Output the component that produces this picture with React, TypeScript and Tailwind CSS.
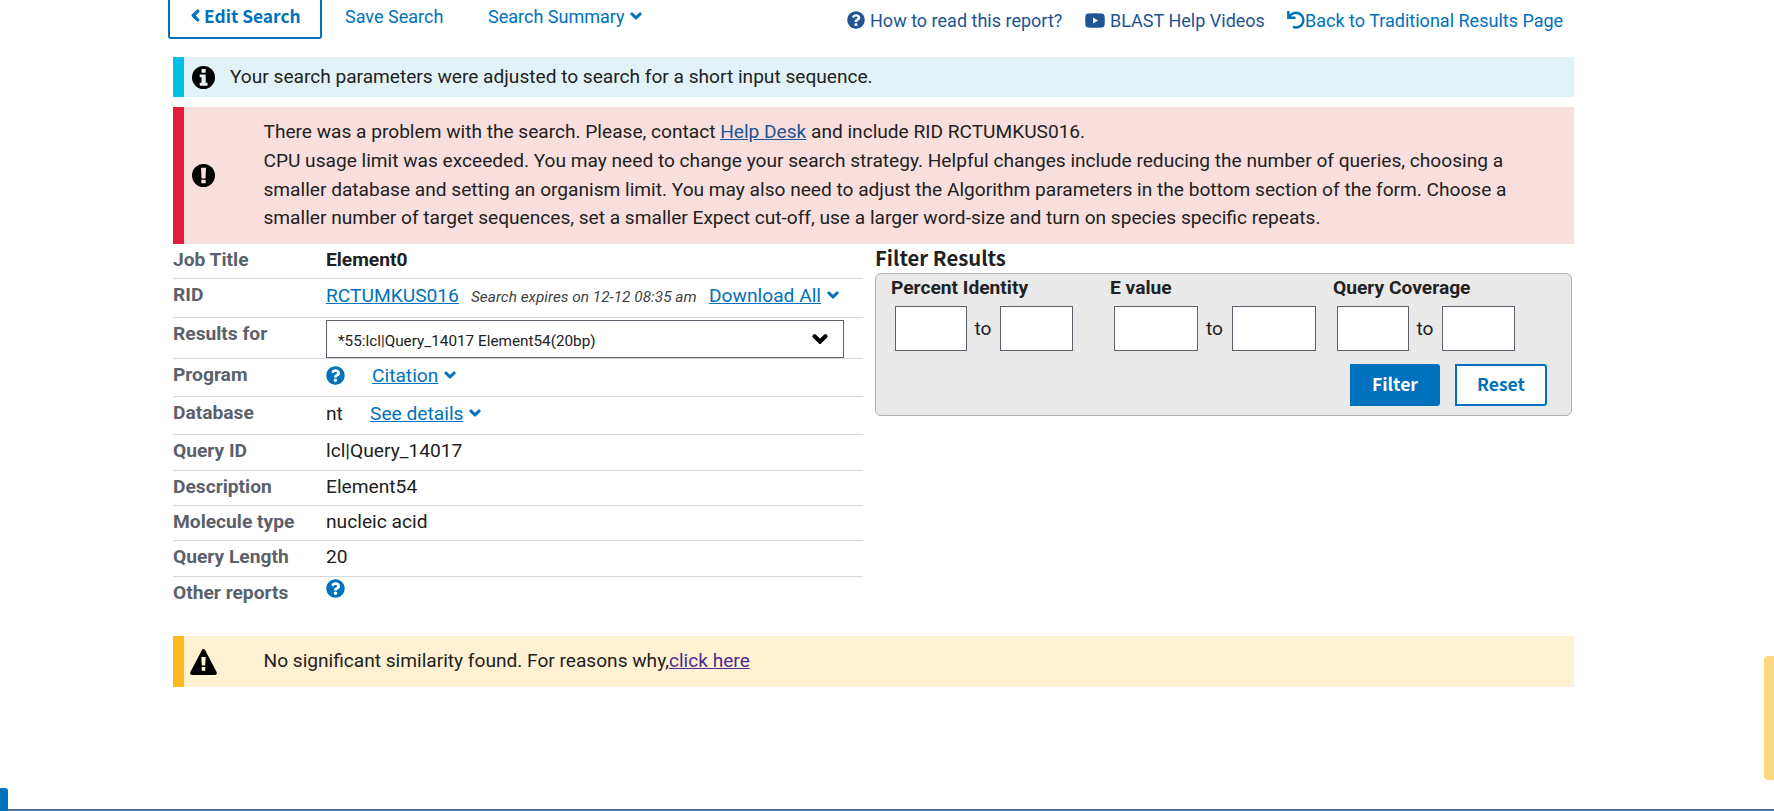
import type { ReactNode } from 'react';
import { FaChevronDown, FaChevronLeft, FaQuestionCircle } from 'react-icons/fa';

const heading = "font-['Noto_Sans_CJK_SC',sans-serif] font-bold";
const heavy = 'stroke-current stroke-[50px]';

function Row({ label, height, children }: { label: string; height: string; children: ReactNode }) {
  return (
    <div className={`flex items-start border-b border-[#d6d7d9] pt-[2px] last:border-b-0 ${height}`}>
      <dt className="w-[153px] shrink-0 font-bold text-[#5b616b]">{label}</dt>
      <dd className="flex flex-1 items-start">{children}</dd>
    </div>
  );
}

function Range({ label, className, first, second, gap }: { label: string; className: string; first: string; second: string; gap: string }) {
  return (
    <div className={className}>
      <div className="-ml-px font-bold text-[#212121]">{label}</div>
      <div className={`mt-[3px] ml-[3px] flex items-center ${gap}`}>
        <input className={`h-[45px] border border-[#5b616b] bg-white ${first}`} />
        <span className="w-4 pt-[2px] -indent-px">to</span>
        <input className={`h-[45px] border border-[#5b616b] bg-white ${second}`} />
      </div>
    </div>
  );
}

export default function App() {
  return (
    <div className="relative h-[811px] w-[1774px] overflow-hidden bg-white font-[Roboto,sans-serif] text-[19.2px] leading-[28.8px] text-[#212121]">
      <header className="flex h-[57px] items-start pl-[168px] text-[18.02px] text-[#0071bc]">
        <button className={`flex h-[39px] w-[154px] items-start rounded-b-[3px] border-2 border-t-0 border-[#0071bc] pt-[2px] pl-[19px] whitespace-nowrap ${heading} text-[17.35px]`}>
          <FaChevronLeft className={`mt-[7px] mr-[2px] h-[13px] w-[13px] ${heavy}`} />
          Edit Search
        </button>
        <a className="mt-[3px] ml-[23px] w-[143px]">Save Search</a>
        <a className="mt-[3px] flex w-[359px] items-start">
          Search Summary
          <FaChevronDown className={`mt-[7px] ml-[5px] size-[12px] ${heavy}`} />
        </a>
        <a className="mt-[7px] flex w-[238px] items-start text-[#205493]">
          <FaQuestionCircle className="mt-[4px] mr-[5px] size-[18px]" />
          How to read this report?
        </a>
        <a className="mt-[7px] flex w-[202px] items-start text-[#205493]">
          <svg viewBox="0 0 20 15" className="mt-[6px] mr-[5px] h-[15px] w-5">
            <path fill="currentColor" fillRule="evenodd" d="M3 .5Q10 0 17 .5Q19.5 .6 19.6 3Q20 7.500 19.600 12Q19.500 14.300 17 14.500Q10 15 3 14.500Q.5 14.300.4 12Q0 7.500.4 3Q.5.6 3 .5ZM8 4.500V10.500L13 7.500Z" />
          </svg>
          BLAST Help Videos
        </a>
        <a className="mt-[7px] flex items-start">
          <svg viewBox="0 0 18 19" className="mt-[4px] h-[19px] w-[18px]" fill="none" stroke="currentColor" strokeWidth="2.400">
            <path d="M1.300 0V6.800H8.500M2 6Q5 1.800 9.300 1.800A7.300 7.300 0 1 1 6 15.700" />
          </svg>
          Back to Traditional Results Page
        </a>
      </header>

      <main className="ml-[173px] w-[1401px]">
        <section className="flex h-10 items-start border-l-[11px] border-[#02bfe7] bg-[#e1f3f8] pt-[6px]">
          <svg viewBox="0 0 23 23" className="mt-[3px] ml-[8px] size-[23px] shrink-0">
            <circle cx="11.500" cy="11.500" r="11.500" fill="black" />
            <path fill="#e1f3f8" d="M9.500 3h4.200v3.800H9.500zM7.700 8.500h6v8.300h1.800v3H7.700v-3h1.800v-5.500H7.700z" />
          </svg>
          <p className="ml-[15px] text-[19.12px]">Your search parameters were adjusted to search for a short input sequence.</p>
        </section>

        <section className="mt-[10px] flex h-[137px] items-start border-l-[11px] border-[#e31c3d] bg-[#f9dede] pt-[11px]">
          <svg viewBox="0 0 23 23" className="mt-[46px] ml-[8px] size-[23px] shrink-0">
            <circle cx="11.500" cy="11.500" r="11.500" fill="black" />
            <path fill="#f9dede" d="M9 3.800h5l-.5 10.700h-4zM9.300 15.700h4.400v3.600H9.300z" />
          </svg>
          <p className="ml-[48.5px] text-[19.12px] whitespace-nowrap">
            There was a problem with the search. Please, contact <a className="text-[#205493] underline">Help Desk</a> and include RID RCTUMKUS016.
            <br />
            CPU usage limit was exceeded. You may need to change your search strategy. Helpful changes include reducing the number of queries, choosing a
            <br />
            smaller database and setting an organism limit. You may also need to adjust the Algorithm parameters in the bottom section of the form. Choose a
            <br />
            smaller number of target sequences, set a smaller Expect cut-off, use a larger word-size and turn on species specific repeats.
          </p>
        </section>

        <div className="flex h-[392px] items-start gap-[12px]">
          <dl className="w-[690px]">
            <Row label="Job Title" height="h-[35px]"><strong className="font-bold">Element0</strong></Row>
            <Row label="RID" height="h-[39px]">
              <div className="mt-px flex items-start text-[#0071bc]">
                <a className="w-[145px] underline">RCTUMKUS016</a>
                <em className="mt-px w-[238px] text-[15.4px] whitespace-nowrap text-[#424242]">Search expires on 12-12 08:35 am</em>
                <a className="underline">Download All</a>
                <FaChevronDown className={`mt-[7px] ml-[6px] size-[12px] ${heavy}`} />
              </div>
            </Row>
            <Row label="Results for" height="h-[41px]">
              <div className="flex h-[38px] w-[518px] items-center justify-between border border-[#5b616b] bg-white pr-[15px] pl-[11px] text-[15.3px]">
                <span className="mt-[4px]">*55:lcl|Query_14017 Element54(20bp)</span>
                <FaChevronDown className={`size-[16px] text-black ${heavy}`} />
              </div>
            </Row>
            <Row label="Program" height="h-[38px]">
              <FaQuestionCircle className="mt-[5px] mr-[28px] size-[19px] text-[#0071bc]" />
              <a className="mt-px -ml-px text-[#0071bc] underline">Citation</a>
              <FaChevronDown className={`mt-[8px] ml-[6px] size-[12px] text-[#0071bc] ${heavy}`} />
            </Row>
            <Row label="Database" height="h-[38px]">
              <span className="mt-px w-[44px]">nt</span>
              <a className="mt-px text-[#0071bc] underline">See details</a>
              <FaChevronDown className={`mt-[8px] ml-[6px] size-[12px] text-[#0071bc] ${heavy}`} />
            </Row>
            <Row label="Query ID" height="h-[36px]">lcl|Query_14017</Row>
            <Row label="Description" height="h-[35px]">Element54</Row>
            <Row label="Molecule type" height="h-[35px]">nucleic acid</Row>
            <Row label="Query Length" height="h-[36px]">20</Row>
            <Row label="Other reports" height="h-[36px]">
              <FaQuestionCircle className="size-[19px] text-[#0071bc]" />
            </Row>
          </dl>

          <section className="w-[697px]">
            <h2 className={`${heading} h-[29px] text-[20.3px] leading-[27px]`}>Filter Results</h2>
            <div className="h-[143px] rounded-[6px] border border-[#aeb0b5] bg-[#e9e9e9] pl-[16px]">
              <div className="flex">
                <Range label="Percent Identity" className="w-[219px]" first="w-[72px]" second="w-[73px]" gap="gap-[8.500px]" />
                <Range label="E value" className="w-[223px]" first="w-[84px]" second="w-[84px]" gap="gap-[9px]" />
                <Range label="Query Coverage" className="w-[220px]" first="w-[72px]" second="w-[73px]" gap="gap-[8.500px]" />
              </div>
              <div className={`mt-[13px] mr-[24px] flex justify-end gap-[15px] text-[17.500px] ${heading}`}>
                <button className="h-[42px] w-[90px] rounded-r-[3px] bg-[#0071bc] text-white">Filter</button>
                <button className="h-[42px] w-[92px] rounded-r-[3px] border-2 border-[#0071bc] bg-white text-[#0071bc]">Reset</button>
              </div>
            </div>
          </section>
        </div>

        <section className="flex h-[51px] items-start border-l-[11px] border-[#fdb81e] bg-[#fff1d2] pt-[11px]">
          <svg viewBox="0 0 27 26" className="mt-[2px] ml-[6px] h-[26px] w-[27px]">
            <path d="M13.500 0Q14.600 0 15.300 1.400L26.700 23.200Q27.400 26 25 26H2Q-.4 26 .3 23.200L11.700 1.400Q12.400 0 13.500 0Z" />
            <path fill="#fff1d2" d="M11.300 8h4.400l-.5 8.500h-3.400zM11.700 18h3.600v3.800h-3.600z" />
          </svg>
          <p className="ml-[46.5px] text-[19.12px]">
            No significant similarity found. For reasons why,<a className="text-[#4c2c92] underline">click here</a>
          </p>
        </section>
      </main>

      <div className="absolute top-[656px] right-0 h-[124px] w-[10px] rounded-l-[4px] bg-[#fcd981]" />
      <div className="absolute bottom-0 left-0 h-[2px] w-full bg-[#4773aa]" />
      <div className="absolute bottom-0 left-0 h-[23px] w-[8px] rounded-tr-[3px] bg-[#0071bc]" />
    </div>
  );
}
